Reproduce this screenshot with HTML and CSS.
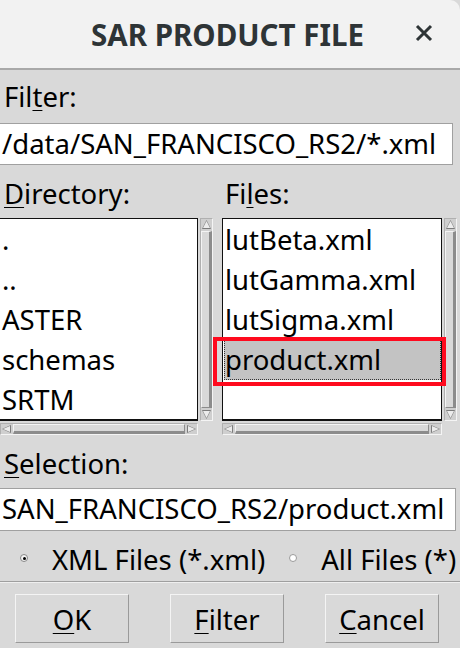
FILE: index.html
```html
<!DOCTYPE html>
<html>
<head>
<meta charset="utf-8">
<link rel="stylesheet" href="styles.css">
</head>
<body>
<div class="window">
  <header class="titlebar">
    <span class="title">SAR PRODUCT FILE</span>
    <svg class="close" width="18" height="18" viewBox="0 0 18 18"><path d="M2 2 L16 16 M16 2 L2 16" stroke="#2e3436" stroke-width="3" stroke-linecap="butt"/></svg>
  </header>
  <main class="dialog">
    <div class="lbl lbl-top">Fil<u>t</u>er:</div>
    <div class="entry">/data/SAN_FRANCISCO_RS2/*.xml</div>
    <div class="panes">
      <div class="pane pane-dir">
        <div class="lbl"><u>D</u>irectory:</div>
        <div class="scrolled">
          <ul class="list">
            <li>.</li>
            <li>..</li>
            <li>ASTER</li>
            <li>schemas</li>
            <li>SRTM</li>
          </ul>
          <div class="vscroll">
            <span class="arrow up"></span><span class="vslider"></span><span class="arrow down"></span>
          </div>
          <div class="hscroll">
            <span class="arrow left"></span><span class="hslider"></span><span class="arrow right"></span>
          </div>
        </div>
      </div>
      <div class="pane pane-files">
        <div class="lbl lbl-files">Fi<u>l</u>es:</div>
        <div class="scrolled">
          <ul class="list">
            <li>lutBeta.xml</li>
            <li>lutGamma.xml</li>
            <li>lutSigma.xml</li>
            <li class="selected">product.xml</li>
          </ul>
          <div class="vscroll">
            <span class="arrow up"></span><span class="vslider"></span><span class="arrow down"></span>
          </div>
          <div class="hscroll">
            <span class="arrow left"></span><span class="hslider"></span><span class="arrow right"></span>
          </div>
        </div>
      </div>
    </div>
    <div class="lbl lbl-sel"><u>S</u>election:</div>
    <div class="entry entry-sel">SAN_FRANCISCO_RS2/product.xml</div>
    <div class="radios">
      <span class="radio"><span class="dot on"></span>XML Files (*.xml)</span>
      <span class="radio"><span class="dot"></span>All Files (*)</span>
    </div>
    <div class="buttons">
      <span class="btn"><u>O</u>K</span>
      <span class="btn"><u>F</u>ilter</span>
      <span class="btn"><u>C</u>ancel</span>
    </div>
  </main>
</div>
</body>
</html>
```

FILE: styles.css
```css
* { box-sizing: border-box; }
html, body { margin: 0; padding: 0; }
body {
  width: 460px;
  height: 648px;
  overflow: hidden;
  background: #d9d9d9;
  font-family: "Noto Sans", "Open Sans", sans-serif;
  font-size: 27.5px;
  color: #000;
}
u { text-decoration-thickness: 1px; text-underline-offset: 3px; }

.titlebar {
  height: 70px;
  background: #f2f2f2;
  border-bottom: 2px solid #a9a9a9;
  border-top-right-radius: 10px;
  position: relative;
  display: flex;
  align-items: center;
  padding-left: 91px;
}
.title {
  font-weight: bold;
  font-size: 29.5px;
  color: #2e3436;
  line-height: 1;
  padding-top: 2px;
}
.close {
  position: absolute;
  left: 415px;
  top: 24px;
}

.dialog {
  display: flex;
  flex-direction: column;
}
.lbl {
  line-height: 36px;
  height: 36px;
  padding-left: 4px;
}
.lbl-top { margin-top: 9px; }
.entry {
  margin-top: 8px;
  height: 42px;
  line-height: 40px;
  width: 453px;
  background: #fff;
  border: 1px solid #a0a0a0;
  border-left: none;
  padding-left: 2px;
  white-space: nowrap;
  overflow: hidden;
}

.panes {
  display: flex;
  gap: 9px;
  margin-top: 11px;
}
.pane { display: flex; flex-direction: column; }
.pane-dir { width: 213px; }
.pane-files { width: 235px; }
.lbl-files { padding-left: 3px; }
.scrolled {
  margin-top: 6px;
  display: grid;
  grid-template-columns: 1fr 13px;
  grid-template-rows: 203px 12px;
  column-gap: 2px;
  row-gap: 2px;
}
.list {
  margin: 0;
  padding: 1px 0 0 1px;
  list-style: none;
  background: #fff;
  border: 1px solid #111;
  border-bottom-width: 2px;
}
.pane-dir .list { border-left: none; padding-left: 2px; }
.list li {
  line-height: 40px;
  height: 40px;
  white-space: nowrap;
}
.pane-files .list li { padding-left: 1px; }
.list li.selected {
  position: relative;
  background: #c3c3c3;
  outline: 1px dotted #333;
  outline-offset: -1px;
}
.list li.selected::after {
  content: "";
  position: absolute;
  left: -11px;
  right: -5px;
  top: -3px;
  bottom: -6px;
  border: 4px solid #ff0a1e;
}

.vscroll, .hscroll {
  display: flex;
  background: #cfcfcf;
  border: 1px solid;
  border-color: #b0b0b0 #f4f4f4 #f4f4f4 #b0b0b0;
}
.vscroll { flex-direction: column; }
.vslider {
  flex: 1;
  margin: 1px 0;
  background: #d9d9d9;
  border: 1px solid;
  border-color: #f4f4f4 #8c8c8c #8c8c8c #f4f4f4;
  border-right-width: 3px;
}
.hslider {
  flex: 1;
  margin: 0 1px;
  background: #d9d9d9;
  border: 1px solid;
  border-color: #f4f4f4 #8c8c8c #8c8c8c #f4f4f4;
  border-bottom-width: 3px;
}
.arrow {
  width: 11px;
  height: 11px;
  flex: none;
  position: relative;
}
.hscroll .arrow { height: 10px; }
.arrow::before {
  content: "";
  position: absolute;
  inset: 1px;
  background: #7c7c7c;
}
.arrow::after {
  content: "";
  position: absolute;
  inset: 2px;
  background: #ececec;
}
.arrow.up::before, .arrow.up::after { clip-path: polygon(50% 0, 100% 100%, 0 100%); }
.arrow.down::before, .arrow.down::after { clip-path: polygon(0 0, 100% 0, 50% 100%); }
.arrow.left::before, .arrow.left::after { clip-path: polygon(0 50%, 100% 0, 100% 100%); }
.arrow.right::before, .arrow.right::after { clip-path: polygon(0 0, 100% 50%, 0 100%); }

.lbl-sel { margin-top: 11px; }
.entry-sel { margin-top: 6px; height: 43px; width: 456px; }

.radios {
  margin-top: 11px;
  height: 36px;
  line-height: 36px;
  display: flex;
  padding-left: 20px;
}
.radio { display: flex; align-items: center; white-space: nowrap; }
.radio + .radio { margin-left: 24px; }
.dot {
  width: 8px;
  height: 8px;
  border-radius: 50%;
  background: #fff;
  border: 1px solid #9a9a9a;
  margin-right: 24px;
  position: relative;
  top: -2px;
}
.dot.on { background: #f4f4f4; border-color: #888; }
.dot.on::after {
  content: "";
  position: absolute;
  left: 1.5px; top: 1.5px;
  width: 3px; height: 3px;
  border-radius: 50%;
  background: #000;
}

.buttons {
  margin-top: 3px;
  border-top: 1px solid #9f9f9f;
  box-shadow: inset 0 1px 0 #efefef;
  padding: 12px 0 0 15px;
  display: flex;
  gap: 41px;
}
.btn {
  width: 114px;
  height: 49px;
  border: 1px solid;
  border-color: #f4f4f4 #9a9a9a #9a9a9a #f4f4f4;
  padding-top: 3px;
  line-height: 44px;
  text-align: center;
  background: #d9d9d9;
}
```
